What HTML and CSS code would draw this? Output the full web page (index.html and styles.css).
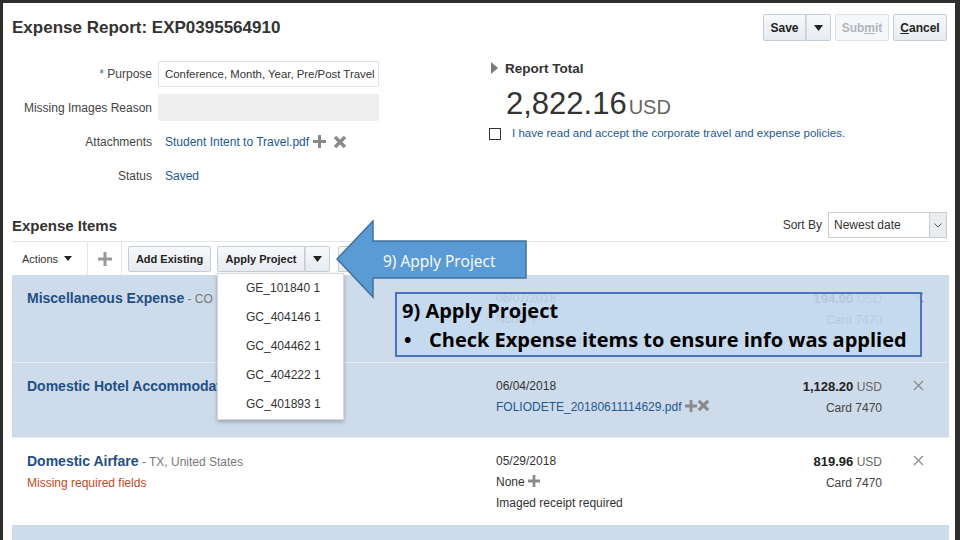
FILE: index.html
```html
<!DOCTYPE html>
<html lang="en">
<head>
    <meta charset="UTF-8">
    <title>Expense Report: EXP0395564910</title>
    <link rel="stylesheet" href="styles.css">
</head>
<body>
<div class="page">

    <!-- title bar -->
    <div class="report-head">
        <h1>Expense Report: EXP0395564910</h1>
        <div class="head-buttons">
            <div class="btn-split">
                <span class="btn btn-main">Save</span>
                <span class="btn btn-drop"><svg width="9" height="6" viewBox="0 0 9 6"><path d="M0 0h9L4.5 6z" fill="#222"/></svg></span>
            </div>
            <span class="btn btn-disabled">Sub<u>m</u>it</span>
            <span class="btn"><u>C</u>ancel</span>
        </div>
    </div>

    <!-- header fields and total -->
    <div class="summary">
        <div class="fields">
            <div class="field-label"><span class="req">*</span> Purpose</div>
            <div class="field-value"><div class="text-input">Conference, Month, Year, Pre/Post Travel</div></div>

            <div class="field-label">Missing Images Reason</div>
            <div class="field-value"><div class="text-input readonly"></div></div>

            <div class="field-label">Attachments</div>
            <div class="field-value">
                <a class="link">Student Intent to Travel.pdf</a>
                <svg class="ico-plus" width="13" height="13" viewBox="0 0 13 13"><path d="M5 0h3v5h5v3H8v5H5V8H0V5h5z" fill="#8a8a8a"/></svg>
                <svg class="ico-del" width="14" height="14" viewBox="0 0 14 14"><path d="M2 2l10 10M12 2L2 12" stroke="#8a8a8a" stroke-width="3.4"/></svg>
            </div>

            <div class="field-label">Status</div>
            <div class="field-value"><span class="link">Saved</span></div>
        </div>

        <div class="total">
            <div class="total-title"><svg width="8" height="12" viewBox="0 0 8 12"><path d="M0 0l7 6-7 6z" fill="#7a7a7a"/></svg>Report Total</div>
            <div class="total-amount">2,822.16<span class="currency">USD</span></div>
            <div class="policy"><span class="checkbox"></span>I have read and accept the corporate travel and expense policies.</div>
        </div>
    </div>

    <!-- expense items -->
    <div class="items-head">
        <h2>Expense Items</h2>
        <div class="sort">
            <span class="sort-label">Sort By</span>
            <div class="select">
                <span>Newest date</span>
                <span class="select-arrow"><svg width="8" height="5" viewBox="0 0 8 5"><path d="M0.5 0.5l3.5 3.5 3.5-3.5" fill="none" stroke="#555"/></svg></span>
            </div>
        </div>
    </div>

    <div class="toolbar">
        <div class="tb-actions">Actions <svg width="8" height="5" viewBox="0 0 8 5"><path d="M0 0h8L4 5z" fill="#222"/></svg></div>
        <div class="tb-add"><svg width="14" height="14" viewBox="0 0 14 14"><path d="M5.5 0h3v5.5H14v3H8.5V14h-3V8.5H0v-3h5.5z" fill="#999"/></svg></div>
        <span class="btn tb-btn">Add Existing</span>
        <div class="btn-split tb-btn">
            <span class="btn btn-main">Apply Project</span>
            <span class="btn btn-drop"><svg width="9" height="6" viewBox="0 0 9 6"><path d="M0 0h9L4.5 6z" fill="#222"/></svg></span>
        </div>
        <span class="btn tb-btn tb-last">Remove</span>
    </div>

    <div class="item alt">
        <div class="item-main">
            <div><span class="item-name">Miscellaneous Expense</span> <span class="item-loc">- CO</span></div>
        </div>
        <div class="item-info">
            <div>06/07/2018</div>
            <div>None <svg class="ico-plus" width="12" height="12" viewBox="0 0 13 13"><path d="M5 0h3v5h5v3H8v5H5V8H0V5h5z" fill="#8a8a8a"/></svg></div>
            <div>Imaged receipt required</div>
        </div>
        <div class="item-amount">
            <div><b>194.00</b> <span class="cur">USD</span></div>
            <div>Card 7470</div>
        </div>
        <div class="item-close"><svg width="11" height="11" viewBox="0 0 11 11"><path d="M1 1l9 9M10 1l-9 9" stroke="#8c8c8c" stroke-width="1.3"/></svg></div>
    </div>

    <div class="item alt short">
        <div class="item-main">
            <div><span class="item-name">Domestic Hotel Accommodation</span></div>
        </div>
        <div class="item-info">
            <div>06/04/2018</div>
            <div><a class="link">FOLIODETE_20180611114629.pdf</a> <svg class="ico-plus" width="12" height="12" viewBox="0 0 13 13"><path d="M5 0h3v5h5v3H8v5H5V8H0V5h5z" fill="#8a8a8a"/></svg><svg class="ico-del" width="13" height="13" viewBox="0 0 14 14"><path d="M2 2l10 10M12 2L2 12" stroke="#8a8a8a" stroke-width="3.4"/></svg></div>
        </div>
        <div class="item-amount">
            <div><b>1,128.20</b> <span class="cur">USD</span></div>
            <div>Card 7470</div>
        </div>
        <div class="item-close"><svg width="11" height="11" viewBox="0 0 11 11"><path d="M1 1l9 9M10 1l-9 9" stroke="#8c8c8c" stroke-width="1.3"/></svg></div>
    </div>

    <div class="item">
        <div class="item-main">
            <div><span class="item-name">Domestic Airfare</span> <span class="item-loc">- TX, United States</span></div>
            <div class="item-warn">Missing required fields</div>
        </div>
        <div class="item-info">
            <div>05/29/2018</div>
            <div>None <svg class="ico-plus" width="12" height="12" viewBox="0 0 13 13"><path d="M5 0h3v5h5v3H8v5H5V8H0V5h5z" fill="#8a8a8a"/></svg></div>
            <div>Imaged receipt required</div>
        </div>
        <div class="item-amount">
            <div><b>819.96</b> <span class="cur">USD</span></div>
            <div>Card 7470</div>
        </div>
        <div class="item-close"><svg width="11" height="11" viewBox="0 0 11 11"><path d="M1 1l9 9M10 1l-9 9" stroke="#8c8c8c" stroke-width="1.3"/></svg></div>
    </div>

    <div class="item alt"></div>

    <!-- open menu of Apply Project -->
    <ul class="dropdown">
        <li>GE_101840 1</li>
        <li>GC_404146 1</li>
        <li>GC_404462 1</li>
        <li>GC_404222 1</li>
        <li>GC_401893 1</li>
    </ul>

    <!-- training annotations -->
    <div class="arrow-callout">
        <svg width="192" height="80" viewBox="0 0 192 80"><path d="M1 39L37 1v20h153v37H37v19z" fill="#5b9bd5" stroke="#41719c" stroke-width="1.5"/></svg>
        <span class="arrow-text">9) Apply Project</span>
    </div>

    <div class="note">
        <div class="note-title">9) Apply Project</div>
        <div class="note-line"><span class="bullet">•</span>Check Expense items to ensure info was applied</div>
    </div>
</div>
</body>
</html>
```

FILE: styles.css
```css
:root {
    --text: #333333;
    --label: #444444;
    --link: #245891;
    --row: #cedbea;
    --border: #c4ced8;
}

body {
    margin: 0;
    background-color: #2e2e2e;
    font-family: "Liberation Sans", Arial, sans-serif;
    color: var(--text);
}

.page {
    position: relative;
    margin: 3px 5px 0 3px;
    height: 537px;
    padding: 0 6px 0 9px;
    background-color: white;
    overflow: hidden;
}

/* buttons */
.btn {
    display: inline-flex;
    align-items: center;
    justify-content: center;
    box-sizing: border-box;
    height: 27px;
    padding: 0 10px;
    border: 1px solid var(--border);
    border-radius: 2px;
    background: linear-gradient(#f7f8fa, #e7ebef);
    font-size: 12px;
    font-weight: bold;
    color: #222;
}

.btn u {
    text-decoration: underline;
}

.btn-disabled {
    background: #f6f7f8;
    border-color: #dde2e6;
    color: #b0b5ba;
}

.btn-split {
    display: inline-flex;
}

.btn-split .btn-main {
    border-radius: 2px 0 0 2px;
}

.btn-split .btn-drop {
    width: 25px;
    padding: 0;
    border-left: none;
    border-radius: 0 2px 2px 0;
    box-shadow: inset 1px 0 0 #d3dae1;
}

/* title bar */
.report-head {
    display: flex;
    justify-content: space-between;
    align-items: center;
    padding-top: 11px;
    height: 27px;
}

h1 {
    margin: 0;
    font-size: 17px;
    color: #333;
}

.head-buttons {
    display: flex;
    gap: 4px;
    padding-right: 2px;
}

.head-buttons .btn-main {
    width: 43px;
}

.head-buttons .btn-disabled,
.head-buttons > .btn {
    width: 54px;
    padding: 0;
}

/* summary */
.summary {
    display: flex;
    margin-top: 19px;
}

.fields {
    display: grid;
    grid-template-columns: 140px 221px;
    grid-auto-rows: 27px;
    column-gap: 6px;
    row-gap: 7px;
}

.field-label {
    align-self: center;
    text-align: right;
    font-size: 12px;
    color: var(--label);
}

.req {
    color: #3d6ea8;
}

.field-value {
    display: flex;
    align-items: center;
    font-size: 12px;
}

.text-input {
    box-sizing: border-box;
    width: 100%;
    height: 26px;
    padding: 0 6px;
    border: 1px solid #dfe3e7;
    border-radius: 2px;
    font-size: 11.4px;
    line-height: 24px;
    color: #333;
    white-space: nowrap;
    overflow: hidden;
}

.text-input.readonly {
    height: 27px;
    background-color: #eeeeee;
    border-color: #eeeeee;
}

.link {
    color: var(--link);
    padding-left: 7px;
}

.field-value .ico-plus {
    margin-left: 4px;
}

.field-value .ico-del {
    margin-left: 7px;
}

.total {
    margin-left: 110px;
}

.total-title {
    display: flex;
    align-items: center;
    gap: 6px;
    height: 16px;
    padding-left: 2px;
    font-size: 13.5px;
    font-weight: bold;
    color: #333;
}

.total-amount {
    margin-top: 10px;
    padding-left: 17px;
    font-size: 31px;
    line-height: 36px;
    color: #333;
}

.currency {
    margin-left: 2px;
    font-size: 20px;
    color: #666;
}

.policy {
    display: flex;
    align-items: center;
    margin-top: 1px;
    font-size: 11.5px;
    line-height: 15px;
    color: var(--link);
}

.checkbox {
    box-sizing: border-box;
    width: 12px;
    height: 12px;
    margin-right: 11px;
    border: 1px solid #333;
    background: white;
}

/* items header */
.items-head {
    display: flex;
    justify-content: space-between;
    align-items: center;
    height: 26px;
    margin-top: 23px;
}

h2 {
    margin: 0;
    font-size: 15px;
    color: #333;
}

.sort {
    display: flex;
    align-items: center;
    gap: 6px;
    padding-right: 2px;
}

.sort-label {
    font-size: 12px;
    color: #333;
}

.select {
    box-sizing: border-box;
    display: flex;
    justify-content: space-between;
    align-items: center;
    width: 119px;
    height: 26px;
    padding-left: 5px;
    border: 1px solid #c8cdd2;
    font-size: 12px;
    color: #333;
}

.select-arrow {
    display: flex;
    align-items: center;
    justify-content: center;
    width: 16px;
    height: 100%;
    border-left: 1px solid #c8cdd2;
    background: #eaecee;
}

/* toolbar */
.toolbar {
    box-sizing: border-box;
    display: flex;
    align-items: center;
    height: 34px;
    margin-top: 3px;
    border-top: 1px solid #e2e6ea;
}

.tb-actions {
    display: flex;
    align-items: center;
    gap: 6px;
    height: 100%;
    width: 76px;
    box-sizing: border-box;
    padding-left: 10px;
    border-right: 1px solid #e2e6ea;
    font-size: 11px;
    color: #333;
}

.tb-add {
    display: flex;
    align-items: center;
    justify-content: center;
    width: 33px;
    height: 100%;
    border-right: 1px solid #e2e6ea;
}

.tb-btn {
    margin-left: 6px;
    height: 26px;
    font-size: 11px;
}

.toolbar .btn {
    height: 26px;
    font-size: 11px;
}

.toolbar > .btn:first-of-type {
    width: 83px;
    padding: 0;
}

.toolbar .btn-split .btn-main {
    width: 88px;
    padding: 0;
}

.tb-last {
    margin-left: 8px;
}

/* expense rows */
.item {
    display: grid;
    grid-template-columns: 469px 250px 136px 67px;
    min-height: 63px;
    padding: 13px 0 11px 15px;
    font-size: 12px;
    line-height: 21px;
    color: #333;
}

.item.alt {
    background-color: var(--row);
    border-bottom: 1px solid #e4ebf3;
}

.item.short {
    min-height: 50px;
}

.item-name {
    font-size: 14px;
    font-weight: bold;
    color: #1f4f86;
}

.item-loc {
    color: #777;
}

.item-warn {
    color: #c04a26;
}

.item-info .link {
    padding-left: 0;
}

.item-info svg {
    vertical-align: -1px;
}

.item-amount {
    text-align: right;
    color: #444;
}

.item-amount b {
    font-size: 13px;
    color: #222;
}

.cur {
    color: #666;
}

.item-close {
    padding-left: 31px;
    padding-top: 4px;
    line-height: 0;
}

/* overlays */
.dropdown {
    position: absolute;
    left: 214px;
    top: 270px;
    width: 127px;
    margin: 0;
    padding: 0;
    list-style: none;
    background: white;
    border: 1px solid #d5d9dd;
    box-shadow: 0 2px 4px rgba(0, 0, 0, 0.25);
    box-sizing: border-box;
}

.dropdown li {
    height: 29px;
    padding-left: 28px;
    font-size: 12px;
    line-height: 29px;
    color: #333;
}

.arrow-callout {
    position: absolute;
    left: 333px;
    top: 217px;
    width: 192px;
    height: 80px;
}

.arrow-callout svg {
    display: block;
}

.arrow-text {
    position: absolute;
    left: 47px;
    top: 31px;
    font-family: "Open Sans", sans-serif;
    font-size: 15.5px;
    line-height: 20px;
    color: white;
}

.note {
    position: absolute;
    left: 392px;
    top: 289px;
    width: 527px;
    height: 65px;
    box-sizing: border-box;
    padding: 2px 0 0 5px;
    border: 2px solid #4a74c0;
    background: rgba(196, 216, 239, 0.9);
    font-family: "Open Sans", sans-serif;
    font-size: 20px;
    font-weight: bold;
    line-height: 29px;
    color: black;
}

.note-line {
    display: flex;
}

.bullet {
    width: 25px;
    padding-left: 2px;
}
```
